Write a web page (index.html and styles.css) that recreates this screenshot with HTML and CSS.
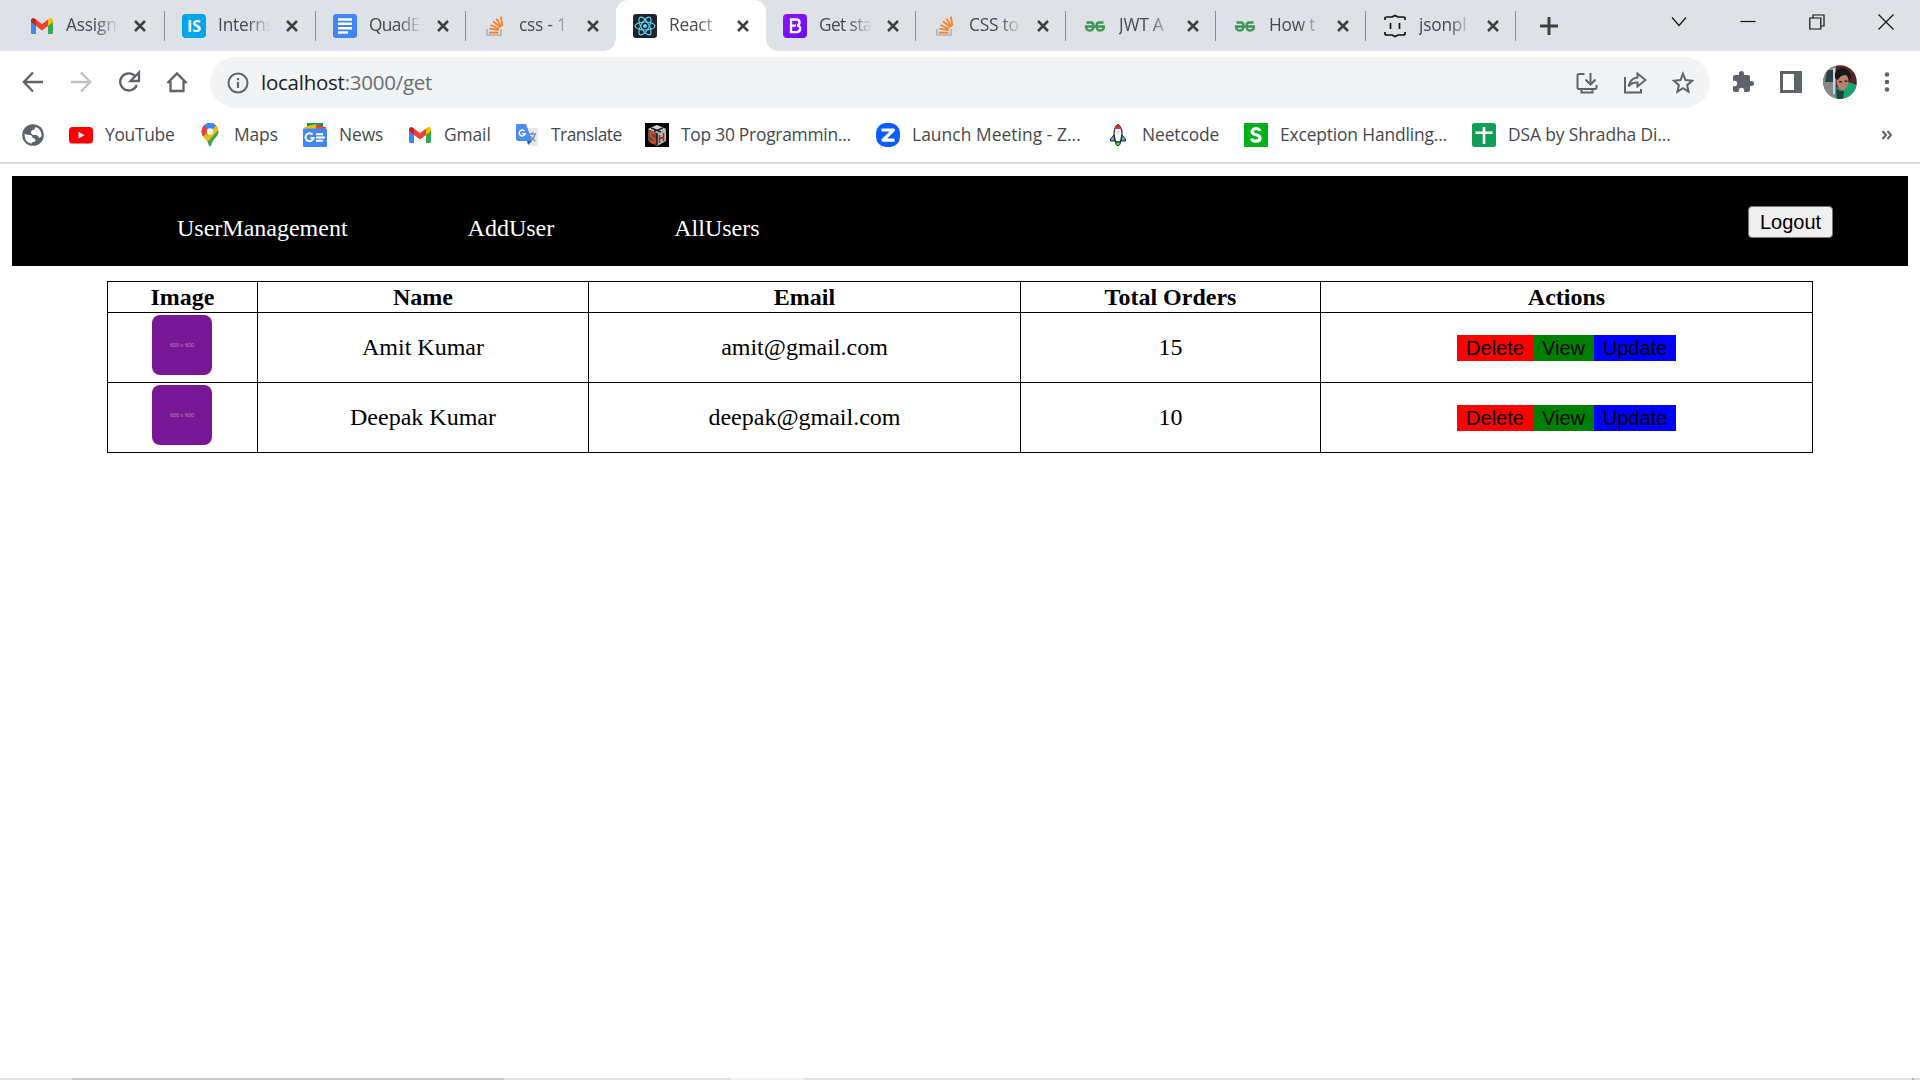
FILE: index.html
```html
<!DOCTYPE html>
<html lang="en">
<head>
<meta charset="utf-8">
<title>React App</title>
<link rel="stylesheet" href="styles.css">
</head>
<body>
<svg width="0" height="0" class="defs">
  <defs>
    <symbol id="x" viewBox="0 0 12 12"><path d="M1 1l10 10M11 1L1 11" stroke="#3c4043" stroke-width="2.500" fill="none"/></symbol>
    <symbol id="gmail" viewBox="0 0 24 24"><path d="M1 6v12.500q0 1.500 1.500 1.500H6V10z" fill="#4285f4"/><path d="M23 6v12.500q0 1.500-1.500 1.500H18V10z" fill="#34a853"/><path d="M1 6.500v1.500l5 4V5.500L4.500 4.400C3 3.300 1 4.400 1 6.500z" fill="#c5221f"/><path d="M23 6.500V8l-5 4V5.500l1.500-1.100C21 3.300 23 4.400 23 6.500z" fill="#fbbc04"/><path d="M6 5.500l6 4.500 6-4.500V12l-6 4.500L6 12z" fill="#ea4335"/></symbol>
    <symbol id="so" viewBox="0 0 24 24"><path d="M4 15v6h14v-6" fill="none" stroke="#bcbbbb" stroke-width="2"/><path d="M6 18.500h9.500M6.300 14.500l9.300 1.500M7.500 10.800l8.600 4M10 7l7.300 6M13.500 4.500l5 8M17.800 2.500l1.700 9" stroke="#f48024" stroke-width="1.800" fill="none" transform="translate(0 .2)"/></symbol>
    <symbol id="gfg" viewBox="0 0 24 24"><path d="M2 12.500h20M3.500 8.500h4.500q2.500 0 2.500 3.500 0 4.500-3.500 4.500-4 0-4-4M20.500 8.500H16q-2.500 0-2.500 3.500 0 4.500 3.500 4.500 4 0 4-4" fill="none" stroke="#2f8d46" stroke-opacity=".9" stroke-width="2.300"/></symbol>
  </defs>
</svg>
<header class="browser">
  <div class="tabstrip">
    <div class="tab wide first"><svg class="fav"><use href="#gmail"/></svg><span class="title">Assign</span><svg class="close"><use href="#x"/></svg></div>
    <div class="tab wide"><svg class="fav" viewBox="0 0 24 24"><rect width="24" height="24" rx="4" fill="#00a5ec"/><text x="12" y="18" text-anchor="middle" class="is">IS</text></svg><span class="title">Interns</span><svg class="close"><use href="#x"/></svg></div>
    <div class="tab"><svg class="fav" viewBox="0 0 24 24"><rect width="24" height="24" rx="3" fill="#4285f4"/><path d="M5 5.500h14M5 9.800h14M5 14.200h14M5 18.500h10" stroke="#fff" stroke-width="2.500"/></svg><span class="title tight">QuadE</span><svg class="close"><use href="#x"/></svg></div>
    <div class="tab nosep"><svg class="fav"><use href="#so"/></svg><span class="title">css - 1</span><svg class="close"><use href="#x"/></svg></div>
    <div class="tab active"><svg class="fav" viewBox="0 0 24 24"><rect width="24" height="24" rx="3" fill="#20232a"/><g fill="none" stroke="#61dafb" stroke-width="1.100"><ellipse cx="12" cy="12" rx="10" ry="4"/><ellipse cx="12" cy="12" rx="10" ry="4" transform="rotate(60 12 12)"/><ellipse cx="12" cy="12" rx="10" ry="4" transform="rotate(120 12 12)"/></g><circle cx="12" cy="12" r="2" fill="#61dafb"/></svg><span class="title">React</span><svg class="close"><use href="#x"/></svg></div>
    <div class="tab"><svg class="fav" viewBox="0 0 24 24"><defs><linearGradient id="bs" x2="1" y2="1"><stop stop-color="#9013fe"/><stop offset="1" stop-color="#6610f2"/></linearGradient></defs><rect width="24" height="24" rx="4" fill="url(#bs)"/><path d="M8 5.500h5.200c2 0 3.300 1 3.300 2.900 0 1.500-.8 2.500-2.200 2.900 1.800.3 2.900 1.500 2.900 3.300 0 2.300-1.600 3.600-4 3.600H8zM8 11.600h5" fill="none" stroke="#fff" stroke-width="2.300"/></svg><span class="title tight">Get sta</span><svg class="close"><use href="#x"/></svg></div>
    <div class="tab"><svg class="fav"><use href="#so"/></svg><span class="title">CSS to</span><svg class="close"><use href="#x"/></svg></div>
    <div class="tab"><svg class="fav"><use href="#gfg"/></svg><span class="title">JWT A</span><svg class="close"><use href="#x"/></svg></div>
    <div class="tab"><svg class="fav"><use href="#gfg"/></svg><span class="title">How t</span><svg class="close"><use href="#x"/></svg></div>
    <div class="tab"><svg class="fav" viewBox="0 0 24 24"><path d="M2 6V4q0-1 2-1h5l3-1.500L15 3h5q2 0 2 1v2M2 18v2q0 1 2 1h5l3 1.500L15 21h5q2 0 2-1v-2M7.500 9v6M16.500 9v6" fill="none" stroke="#111" stroke-width="1.700"/></svg><span class="title">jsonpl</span><svg class="close"><use href="#x"/></svg></div>
    <svg class="plus" viewBox="0 0 18 18"><path d="M9 0v18M0 9h18" stroke="#3c4043" stroke-width="3"/></svg>
    <div class="winctl">
      <svg width="16" height="16" viewBox="0 0 16 16"><path d="M1 3.500l7 8 7-8"/></svg>
      <svg width="16" height="16" viewBox="0 0 16 16"><path d="M.5 7.500h15"/></svg>
      <svg width="16" height="16" viewBox="0 0 16 16"><path d="M.8 4h11v11h-11zM4 4V1h11v11h-3"/></svg>
      <svg width="16" height="16" viewBox="0 0 16 16"><path d="M.5.500l15 15M15.500.500l-15 15"/></svg>
    </div>
  </div>
  <div class="toolbar">
    <div class="nav">
      <svg viewBox="0 0 24 24"><path d="M22 12H3M12 2.500L2.800 12l9.200 9.500"/></svg>
      <svg viewBox="0 0 24 24" class="off"><path d="M2 12h19M12 2.500l9.200 9.500-9.200 9.500"/></svg>
      <svg viewBox="0 0 24 24"><path d="M18.500 6.500A8.600 8.600 0 1 0 19.800 15"/><path d="M22 2.500v8.500h-8.500z" fill="#5f6368" stroke="none"/></svg>
      <svg viewBox="0 0 24 24"><path d="M2.500 13L12 3.500l9.500 9.500M5.500 11v10h13V11"/></svg>
    </div>
    <div class="omnibox">
      <svg class="info" viewBox="0 0 22 22"><circle cx="11" cy="11" r="9.500" fill="none" stroke="#5f6368" stroke-width="2"/><path d="M11 10v6M11 6v2.300" stroke="#5f6368" stroke-width="2.200"/></svg>
      <span class="url"><b>localhost</b>:3000/get</span>
      <svg class="act" viewBox="0 0 24 24"><path d="M9.500 3H4q-1.500 0-1.500 1.500v12Q2.500 18 4 18h16q1.500 0 1.500-1.500V14M15.500 2v11M10.500 8.500l5 5 5-5"/><path d="M6.500 18h11v3.500h-11z" fill="#5f6368" stroke="none"/></svg>
      <svg class="act" viewBox="0 0 24 24"><path d="M2 6v15.500h16V18M14.500 2.500l8 6.500-8 6.500v-4Q9 11 5.500 15.500 7 7.500 14.500 6.500z" stroke-width="1.800"/></svg>
      <svg class="act" viewBox="0 0 24 24"><path d="M12 2.800l2.500 6.300 6.600.6-5 4.500 1.500 6.500-5.600-3.500-5.600 3.500 1.500-6.500-5-4.500 6.600-.6z" stroke-width="2.300"/></svg>
    </div>
    <svg class="puzzle" viewBox="0 0 24 24"><path d="M20.500 11H19V7a2 2 0 0 0-2-2h-4V3.500a2.500 2.500 0 0 0-5 0V5H4a2 2 0 0 0-2 2v3.800h1.500a2.700 2.700 0 0 1 0 5.400H2V20a2 2 0 0 0 2 2h3.800v-1.500a2.700 2.700 0 0 1 5.400 0V22H17a2 2 0 0 0 2-2v-4h1.500a2.500 2.500 0 0 0 0-5z" fill="#5f6368"/></svg>
    <svg class="side" viewBox="0 0 22 22"><path d="M0 0h22v22H0zM3 3v16h11V3z" fill="#5f6368" fill-rule="evenodd"/></svg>
    <svg class="avatar" viewBox="0 0 34 34"><defs><clipPath id="av"><circle cx="17" cy="17" r="16.800"/></clipPath></defs><g clip-path="url(#av)"><path d="M0 0h34v34H0z" fill="#5a2328"/><path d="M0 0h13v34H0z" fill="#818c88"/><path d="M4 5h6v12H2z" fill="#2d4145"/><path d="M10 3h2v26h-2z" fill="#c9d5d8"/><path d="M12 34l1-12 6 2 7-7 8 3v14z" fill="#16a672"/><ellipse cx="19.500" cy="16" rx="6" ry="9" fill="#b98068"/><path d="M16 16h3v1.500h-3zM21.500 15.500h3V17h-3z" fill="#3b2420"/><path d="M12 13Q11 3 19 3t9 10l-2 4q0-5-3-7-6 0-8 5z" fill="#15171b"/><path d="M13 23l4 3 4 0-1 8-6 0z" fill="#273c42"/></g></svg>
    <svg class="dots" viewBox="0 0 6 22"><g fill="#5f6368"><circle cx="3" cy="3.500" r="2.300"/><circle cx="3" cy="11" r="2.300"/><circle cx="3" cy="18.500" r="2.300"/></g></svg>
  </div>
  <div class="bookmarks">
    <div class="bm globe"><svg viewBox="0 0 24 24"><circle cx="12" cy="12" r="10.800" fill="#5f6368"/><path d="M3.500 11q3 1 5 1 3 0 3 3 3 0 3 2.500-1 2-3 1.500l-.5 1.500Q3.500 20 3.500 11zM14.500 4q6 2 6 9-1 2-2.500 2-1-3.500-4-3-4 0-4-2.800 0-2.500 3-2.500z" fill="#fff"/></svg></div>
    <div class="bm w129"><svg viewBox="0 0 24 24"><rect y="4" width="24" height="16.500" rx="3.500" fill="#f00"/><path d="M9.500 8.800l6 3.400-6 3.400z" fill="#fff"/></svg><span>YouTube</span></div>
    <div class="bm w105"><svg viewBox="0 0 24 24"><defs><clipPath id="pin"><path d="M12 0a8.500 8.500 0 0 0-8.500 8.500C3.500 14 9 15 10.500 21.500Q12 25.500 13.500 21.500C15 15 20.500 14 20.500 8.500A8.500 8.500 0 0 0 12 0z"/></clipPath></defs><g clip-path="url(#pin)"><path d="M0 0h24v24H0z" fill="#34a853"/><path d="M0 14L12 0h12v3L5 24H0z" fill="#fbbc04"/><path d="M3 0h18L9 12z" fill="#4285f4"/><path d="M0 0h5l6 7-7 8H0z" fill="#ea4335"/><path d="M6 2l4-2h9l-8 8z" fill="#4285f4"/></g><circle cx="12" cy="8.500" r="3.200" fill="#fff"/></svg><span>Maps</span></div>
    <div class="bm w105"><svg viewBox="0 0 24 24"><path d="M4 0h16v6H4z" fill="#0f9d58"/><path d="M1 4l12-3 2 6H2z" fill="#fbbc04"/><path d="M13 2l10 2-1 4h-9z" fill="#ea4335"/><rect y="5.500" width="24" height="18.500" rx="1" fill="#4285f4"/><path d="M9.500 11.500a4 4 0 1 0 1 3.500H7.500M13 11.200h7M13 14.500h9M13 17.800h7" fill="none" stroke="#fff" stroke-width="1.900"/></svg><span>News</span></div>
    <div class="bm w107"><svg><use href="#gmail"/></svg><span>Gmail</span></div>
    <div class="bm w130"><svg viewBox="0 0 24 24"><path d="M10 5h11q2 0 2 2v14q0 2-2 2h-7z" fill="#e6e7e9"/><path d="M14 11h7M17.500 9v2M20 11q-1 5-5 7M15.500 13q1 3 5 5" stroke="#78909c" stroke-width="1.300" fill="none"/><path d="M2 1h9l6 17H3q-2 0-2-2V2q0-1 1-1z" fill="#4c8bf5"/><path d="M12 18h5l-4 4z" fill="#3154b5"/><path d="M9.500 8a3 3 0 1 0 .7 2.700H7.300" fill="none" stroke="#fff" stroke-width="1.400"/></svg><span>Translate</span></div>
    <div class="bm w231"><svg viewBox="0 0 24 24"><path d="M0 0h24v24H0z"/><path d="M12 2l9 4v12l-9 5-9-5V6z" fill="#57504c"/><path d="M3 6l9-4 9 4-9 4z" fill="#d7d5d3"/><path d="M12 10v13l9-5V6z" fill="#b9b5b1"/><path d="M6 5l10 4M18 5L9 8.500M12 10v12" stroke="#222" stroke-width="1.700"/><path d="M10 11q-4-3-5 0 0 2 3 4t2 4q-2 2-5-1" fill="none" stroke="#e34722" stroke-width="2"/><path d="M14.500 20v-8M14.500 16l4-2M18.500 18V10" stroke="#9b2a1d" stroke-width="1.500"/></svg><span>Top 30 Programmin...</span></div>
    <div class="bm w230"><svg viewBox="0 0 24 24"><rect width="24" height="24" rx="10" fill="#0b5cff"/><path d="M5.500 7h12L7 17.200h11.500" fill="none" stroke="#fff" stroke-width="3.200" stroke-linejoin="round"/></svg><span>Launch Meeting - Z...</span></div>
    <div class="bm w138"><svg viewBox="0 0 24 24"><path d="M8 12l-3.500 4v2H9zM16 12l3.500 4v2H15z" fill="#55acee" stroke="#222"/><path d="M12 1.500q4 3 4 9.500l-1.500 8h-5L8 11q0-6.500 4-9.500z" fill="#f5f8fa" stroke="#222" stroke-width="1.200"/><path d="M12 1.500q2.500 1.500 3.200 4.500H8.800Q9.500 3 12 1.500z" fill="#dd2e44"/><circle cx="12" cy="9" r="1.500" fill="#ccd6dd"/><path d="M9.500 19h5q0 3-2.500 4-2.500-1-2.500-4z" fill="#55dd22" stroke="#222"/></svg><span>Neetcode</span></div>
    <div class="bm w228"><svg viewBox="0 0 24 24"><path d="M0 0h24v24H0z" fill="#00b11b"/><path d="M16 8q-1-2.500-4-2.500T8 8.500q0 2.300 4 3.200t4 3.500q0 3-4 3T7.500 15.500" fill="none" stroke="#fff" stroke-width="3.200"/></svg><span>Exception Handling...</span></div>
    <div class="bm last"><svg viewBox="0 0 24 24"><rect width="24" height="24" rx="2.500" fill="#0f9d58"/><path d="M3.500 9.800h17M12 4v17" stroke="#fff" stroke-width="2.600"/></svg><span>DSA by Shradha Di...</span></div>
    <svg class="more" viewBox="0 0 12 10"><path d="M1.500 1L5 5 1.500 9M6.500 1L10 5 6.500 9" fill="none" stroke="#5f6368" stroke-width="2"/></svg>
  </div>
</header>
<main class="page">
  <nav class="navbar">
    <a>UserManagement</a><a>AddUser</a><a>AllUsers</a>
    <button class="logout">Logout</button>
  </nav>
  <table class="users">
    <colgroup><col class="c1"><col class="c2"><col class="c3"><col class="c4"><col class="c5"></colgroup>
    <tr class="head"><th>Image</th><th>Name</th><th>Email</th><th>Total Orders</th><th>Actions</th></tr>
    <tr><td><div class="pic">600 x 600</div></td><td>Amit Kumar</td><td>amit@gmail.com</td><td>15</td><td><div class="actions"><button class="del">Delete</button><button class="view">View</button><button class="upd">Update</button></div></td></tr>
    <tr><td><div class="pic">600 x 600</div></td><td>Deepak Kumar</td><td>deepak@gmail.com</td><td>10</td><td><div class="actions"><button class="del">Delete</button><button class="view">View</button><button class="upd">Update</button></div></td></tr>
  </table>
</main>
<footer class="edge"><i class="e1"></i><i class="e2"></i><i class="e3"></i><i class="e4"></i><i class="e5"></i><i class="e6"></i></footer>
</body>
</html>
```
FILE: styles.css
```css
* { box-sizing: border-box; }
body { margin: 0; width: 1920px; height: 1080px; overflow: hidden; background: #fff; display: flex; flex-direction: column; }
.defs { position: absolute; }
svg { display: block; flex: none; }
.browser { font-family: "Open Sans", "Noto Sans", sans-serif; color: #45494d; height: 164px; border-bottom: 2px solid #dcdcdc; }

.tabstrip { display: flex; height: 51px; background: #dee1e6; padding-left: 14px; }
.tab { width: 150px; height: 51px; display: flex; align-items: center; padding-left: 17px; position: relative; flex: none; }
.tab.wide { width: 151px; }
.tab.first { padding-left: 16px; }
.tab::after { content: ""; position: absolute; right: 0; top: 11px; width: 1.500px; height: 30px; background: #8a8d91; }
.tab.nosep::after { display: none; }
.fav { width: 24px; height: 24px; margin-top: 1px; }
.is { font: bold 16px "Open Sans", sans-serif; fill: #fff; }
.title { margin-left: 12px; width: 54px; white-space: nowrap; font-size: 17.300px; line-height: 30px; margin-top: -1px; letter-spacing: -.2px; -webkit-mask-image: linear-gradient(to right, #000 55%, transparent 98%); mask-image: linear-gradient(to right, #000 55%, transparent 98%); }
.title.tight { letter-spacing: -.6px; }
.close { width: 12px; height: 12px; margin-left: 14px; margin-top: 1px; }
.tab.active { background: #fff; border-radius: 12px 12px 0 0; }
.tab.active::before, .tab.active::after { content: ""; position: absolute; top: auto; bottom: 0; width: 12px; height: 12px; }
.tab.active::before { left: -12px; background: radial-gradient(circle at 0 0, transparent 11.500px, #fff 12px); }
.tab.active::after { right: -12px; background: radial-gradient(circle at 100% 0, transparent 11.500px, #fff 12px); }
.plus { width: 18px; height: 18px; margin: 17px 0 0 24px; }
.winctl { display: flex; gap: 53px; margin: 14px 26px 0 auto; }
.winctl path { fill: none; stroke: #111; stroke-width: 1.200; }

.toolbar { display: flex; align-items: center; height: 62px; padding-left: 21px; }
.nav { display: flex; gap: 24px; width: 189px; }
.nav svg { width: 24px; height: 24px; }
.nav path { fill: none; stroke: #5f6368; stroke-width: 2.300; }
.nav .off path { stroke: #bdc1c6; }
.omnibox { width: 1500px; height: 51px; border-radius: 26px; background: #f1f3f4; display: flex; align-items: center; padding: 0 15px 0 17px; }
.info { width: 22px; height: 22px; margin-top: 1px; }
.url { font-size: 20.500px; line-height: 30px; margin: 0 auto 0 12px; color: #6a6e73; letter-spacing: -.25px; }
.url b { font-weight: 400; color: #202124; }
.act { width: 24px; height: 24px; margin-left: 24px; margin-top: 2px; }
.act path { fill: none; stroke: #5f6368; stroke-width: 2; }
.puzzle { width: 24px; height: 24px; margin-left: 21px; }
.side { width: 22px; height: 22px; margin-left: 25px; }
.avatar { width: 34px; height: 34px; margin-left: 21px; }
.dots { width: 6px; height: 22px; margin-left: 27px; }

.bookmarks { display: flex; align-items: center; height: 44px; padding: 0 27px 0 21px; }
.bm { display: flex; align-items: center; gap: 12px; font-size: 17.400px; line-height: 26px; white-space: nowrap; letter-spacing: -.1px; }
.bm svg { width: 24px; height: 24px; }
.bm span { margin-top: -2px; }
.globe { width: 48px; }
.w105 { width: 105px; }
.w107 { width: 107px; }
.w129 { width: 129px; letter-spacing: -.3px; }
.w130 { width: 130px; letter-spacing: -.5px; }
.w138 { width: 138px; }
.w228 { width: 228px; letter-spacing: -.15px; }
.w230 { width: 230px; letter-spacing: .05px; }
.w231 { width: 231px; letter-spacing: -.25px; }
.more { width: 12px; height: 10px; margin-left: auto; }

.page { flex: 1; padding: 12px; font-family: "Liberation Serif", serif; font-size: 24px; color: #000; }
.navbar { height: 90px; background: #000; color: #fff; display: flex; align-items: flex-start; gap: 120px; padding: 0 75px 0 165px; line-height: 28px; }
.navbar a { margin-top: 38px; }
button { font-family: "Liberation Sans", sans-serif; font-size: 20px; line-height: 24px; color: #000; }
.logout { margin: 30px 0 0 auto; width: 85px; height: 32px; padding: 0; border: 1.500px solid #767676; border-radius: 4px; background: #efefef; }
.users { margin: 15px 0 0 95px; width: 1706px; table-layout: fixed; border-collapse: collapse; line-height: 27px; text-align: center; }
.users th, .users td { border: 1px solid #000; padding: 0; height: 70px; }
.users .head th { height: 31px; }
.c1 { width: 150px; }
.c2 { width: 331px; }
.c3 { width: 432px; }
.c4 { width: 300px; }
.c5 { width: 492px; }
.pic { width: 60px; height: 60px; margin: -5px 0 0 44px; border-radius: 8px; background: #781795; color: #b58abf; font: 5.500px/61px "Liberation Sans", sans-serif; }
.actions { display: flex; justify-content: center; }
.actions button { border: 0; padding: 0; height: 26px; margin-top: 1px; }
.actions .del { background: red; width: 76px; }
.actions .view { background: green; width: 61px; }
.actions .upd { background: blue; width: 82px; }

.edge { display: flex; height: 2px; }
.edge i { background: #e1e1e1; }
.edge .e1 { width: 72px; }
.edge .e2 { width: 432px; background: #c9c9c9; }
.edge .e3 { width: 227px; }
.edge .e4 { width: 73px; background: #f4f4f4; }
.edge .e5 { width: 1108px; }
.edge .e6 { flex: 1; border-left: 2px solid #b5b5b5; }
```
